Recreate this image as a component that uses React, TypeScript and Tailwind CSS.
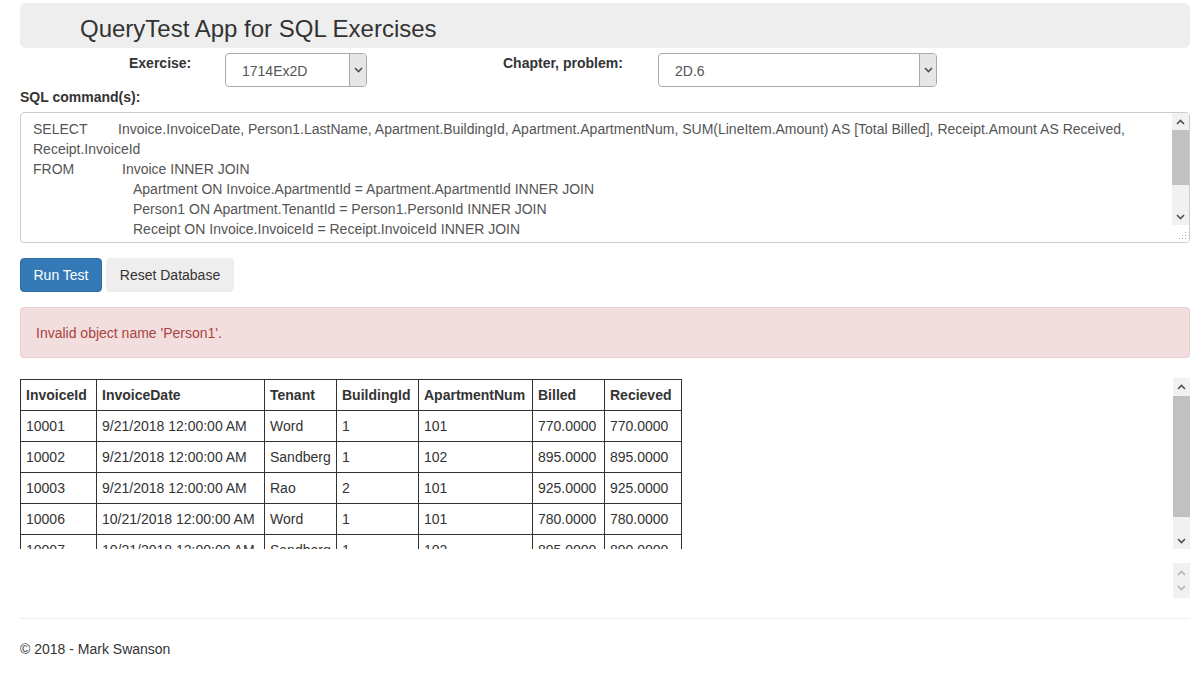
import React from 'react';

const rows = [
  ['10001', '9/21/2018 12:00:00 AM', 'Word', '1', '101', '770.0000', '770.0000'],
  ['10002', '9/21/2018 12:00:00 AM', 'Sandberg', '1', '102', '895.0000', '895.0000'],
  ['10003', '9/21/2018 12:00:00 AM', 'Rao', '2', '101', '925.0000', '925.0000'],
  ['10006', '10/21/2018 12:00:00 AM', 'Word', '1', '101', '780.0000', '780.0000'],
  ['10007', '10/21/2018 12:00:00 AM', 'Sandberg', '1', '102', '895.0000', '890.0000'],
];

const headers = ['InvoiceId', 'InvoiceDate', 'Tenant', 'BuildingId', 'ApartmentNum', 'Billed', 'Recieved'];
const widths = ['w-[76px]', 'w-[168px]', 'w-[72px]', 'w-[82px]', 'w-[114px]', 'w-[72px]', 'w-[77px]'];

function Chevron({ up, color = '#505050' }: { up?: boolean; color?: string }) {
  return (
    <svg width="9" height="6" viewBox="0 0 9 6">
      <path d={up ? 'M1 5 L4.5 1.5 L8 5' : 'M1 1 L4.5 4.5 L8 1'} stroke={color} strokeWidth="1.6" fill="none" />
    </svg>
  );
}

function Select({ value, width }: { value: string; width: string }) {
  return (
    <div className={`${width} flex h-[34px] overflow-hidden rounded-[4px] border border-[#a9a9a9] bg-white`}>
      <div className="flex-1 pl-[16px] pt-[7px] text-[14px] leading-[20px] text-[#555]">{value}</div>
      <div className="flex w-[17px] items-center justify-center border-l border-[#a9a9a9] bg-[#e6e6e6]">
        <Chevron />
      </div>
    </div>
  );
}

function ScrollBar({ thumbTop, thumbHeight, disabled }: { thumbTop?: string; thumbHeight?: string; disabled?: boolean }) {
  const c = disabled ? '#a3a3a3' : '#505050';
  return (
    <div className="flex w-[17px] flex-col bg-[#f1f1f1]">
      <div className="flex h-[17px] items-center justify-center"><Chevron up color={c} /></div>
      <div className="flex flex-1 flex-col">
        {thumbTop && <div className={thumbTop} />}
        {thumbHeight && <div className={`${thumbHeight} bg-[#c1c1c1]`} />}
      </div>
      <div className="flex h-[17px] items-center justify-center"><Chevron color={c} /></div>
    </div>
  );
}

export default function App() {
  return (
    <div className="min-h-[689px] bg-white pl-[20px] pr-[2px] text-[14px] leading-[20px] text-[#333]" style={{ fontFamily: '"Liberation Sans", Arial, sans-serif' }}>
      <div className="mt-[3px] h-[45px] rounded-[6px] bg-[#eee] pl-[60px] pt-[13px]">
        <h1 className="text-[24px] leading-[26px] text-[#333]">QueryTest App for SQL Exercises</h1>
      </div>

      <div className="mt-[5px] flex">
        <div className="w-[109px]" />
        <label className="w-[96px] font-bold">Exercise:</label>
        <Select value="1714Ex2D" width="w-[142px]" />
        <div className="w-[136px]" />
        <label className="w-[155px] font-bold">Chapter, problem:</label>
        <Select value="2D.6" width="w-[279px]" />
      </div>

      <div className="mb-[5px] font-bold">SQL command(s):</div>

      <div className="flex h-[131px] overflow-hidden rounded-[4px] border border-[#ccc]">
        <div className="flex-1 overflow-hidden pl-[12px] pr-[4px] pt-[6px] text-[#555]">
          <div><span className="inline-block w-[85px]">SELECT</span>Invoice.InvoiceDate, Person1.LastName, Apartment.BuildingId, Apartment.ApartmentNum, SUM(LineItem.Amount) AS [Total Billed], Receipt.Amount AS Received,</div>
          <div>Receipt.InvoiceId</div>
          <div><span className="inline-block w-[89px]">FROM</span>Invoice INNER JOIN</div>
          <div className="pl-[100px]">Apartment ON Invoice.ApartmentId = Apartment.ApartmentId INNER JOIN</div>
          <div className="pl-[100px]">Person1 ON Apartment.TenantId = Person1.PersonId INNER JOIN</div>
          <div className="pl-[100px]">Receipt ON Invoice.InvoiceId = Receipt.InvoiceId INNER JOIN</div>
        </div>
        <div className="flex flex-col">
          <div className="flex flex-1">
            <ScrollBar thumbTop="h-0" thumbHeight="h-[55px]" />
          </div>
          <div className="flex h-[17px] w-[17px] items-end justify-end bg-white pb-[2px] pr-[2px]">
            <svg width="8" height="8" viewBox="0 0 8 8">
              <rect x="6" y="0" width="1" height="1" fill="#aaa" />
              <rect x="3" y="3" width="1" height="1" fill="#aaa" />
              <rect x="6" y="3" width="1" height="1" fill="#aaa" />
              <rect x="0" y="6" width="1" height="1" fill="#aaa" />
              <rect x="3" y="6" width="1" height="1" fill="#aaa" />
              <rect x="6" y="6" width="1" height="1" fill="#aaa" />
            </svg>
          </div>
        </div>
      </div>

      <div className="mt-[15px] flex gap-[4px]">
        <button className="h-[34px] w-[82px] rounded-[4px] border border-[#2e6da4] bg-[#337ab7] text-white">Run Test</button>
        <button className="h-[34px] w-[128px] rounded-[4px] bg-[#eee] text-[#333]">Reset Database</button>
      </div>

      <div className="mt-[15px] h-[51px] rounded-[4px] border border-[#ebccd1] bg-[#f2dede] px-[15px] pt-[15px] text-[#a94442]">
        Invalid object name 'Person1'.
      </div>

      <div className="mt-[20px] flex h-[171px]">
        <div className="flex-1 overflow-hidden pt-[1px]">
          <table className="table-fixed border-collapse">
            <thead>
              <tr>
                {headers.map((h, i) => (
                  <th key={h} className={`${widths[i]} h-[31px] border border-[#333] px-[5px] text-left font-bold`}>{h}</th>
                ))}
              </tr>
            </thead>
            <tbody>
              {rows.map(r => (
                <tr key={r[0]}>
                  {r.map((c, i) => (
                    <td key={i} className="h-[31px] whitespace-nowrap border border-[#333] px-[5px]">{c}</td>
                  ))}
                </tr>
              ))}
            </tbody>
          </table>
        </div>
        <ScrollBar thumbTop="h-[1px]" thumbHeight="h-[121px]" />
      </div>

      <div className="mt-[14px] flex h-[35px] justify-end">
        <div className="flex w-[17px] flex-col items-center justify-center gap-[9px] bg-[#f1f1f1]">
          <Chevron up color="#b4b4b4" />
          <Chevron color="#b4b4b4" />
        </div>
      </div>

      <hr className="mt-[20px] border-t border-[#eee]" />

      <footer className="mt-[20px]">© 2018 - Mark Swanson</footer>
    </div>
  );
}
